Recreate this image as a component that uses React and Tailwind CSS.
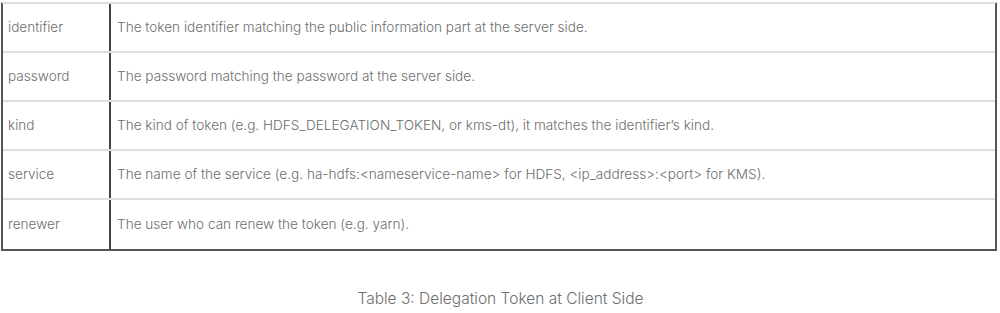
import React from "react";

const rows = [
  ["identifier", "The token identifier matching the public information part at the server side."],
  ["password", "The password matching the password at the server side."],
  ["kind", "The kind of token (e.g. HDFS_DELEGATION_TOKEN, or kms-dt), it matches the identifier\u2019s kind."],
  ["service", "The name of the service (e.g. ha-hdfs:<nameservice-name> for HDFS, <ip_address>:<port> for KMS)."],
  ["renewer", "The user who can renew the token (e.g. yarn)."],
];

export default function App() {
  return (
    <div className="w-[1000px] h-[313px] bg-white pl-[1px] pt-[2px] font-['Inter',sans-serif] font-light text-[#6e6e6e]">
      <div className="w-[996px] border-x-2 border-b-2 border-t-2 border-[#555] border-t-[#dedede]">
        {rows.map(([k, v], i) => (
          <div
            key={k}
            className={`flex h-[49px] ${i < rows.length - 1 ? "border-b-2 border-[#dedede]" : ""}`}
          >
            <div className="w-[108px] shrink-0 border-r-2 border-[#444] pl-[5px] flex items-center text-[13.6px]">
              {k}
            </div>
            <div className="flex-1 pl-[6px] flex items-center text-[13.6px]">{v}</div>
          </div>
        ))}
      </div>
      <div className="mt-[36px] text-center text-[15.5px]">Table 3: Delegation Token at Client Side</div>
    </div>
  );
}
